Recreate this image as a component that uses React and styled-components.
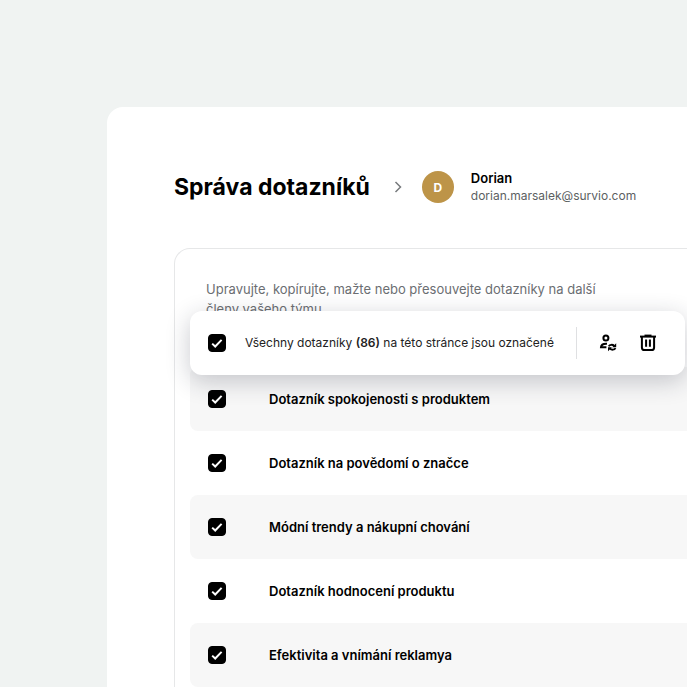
import { useState } from "react";
import styled, { createGlobalStyle } from "styled-components";

const GlobalStyle = createGlobalStyle`
  * {
    box-sizing: border-box;
  }

  body {
    margin: 0;
    background: #f0f3f2;
    color: #000;
    font-family: Inter, "Liberation Sans", sans-serif;
  }
`;

const Page = styled.div`
  display: flex;
  min-height: 100vh;
  padding: 107px 0 0 107px;
  overflow: hidden;
`;

const Panel = styled.main`
  flex: 1;
  min-width: 0;
  padding: 62px 0 0 67px;
  background: #fff;
  border-radius: 16px 0 0 0;
`;

const Header = styled.header`
  display: flex;
  align-items: center;
  margin-bottom: 43px;
`;

const Title = styled.h1`
  margin: 0;
  font-size: 23px;
  font-weight: 700;
  line-height: 36px;
  white-space: nowrap;
`;

const Chevron = styled.svg`
  flex: none;
  width: 8px;
  height: 12px;
  margin: 0 20px 0 24px;
`;

const Avatar = styled.div`
  display: flex;
  flex: none;
  align-items: center;
  justify-content: center;
  width: 32px;
  height: 32px;
  margin-right: 17px;
  border-radius: 50%;
  background: #bd9448;
  color: #fff;
  font-size: 12px;
  font-weight: 700;
`;

const UserName = styled.p`
  margin: 0;
  font-size: 13px;
  font-weight: 600;
  line-height: 18px;
`;

const UserEmail = styled.p`
  margin: 0;
  color: #5c5f62;
  font-size: 12px;
  line-height: 18px;
`;

const Card = styled.section`
  position: relative;
  padding: 30px 0 0 15px;
  border: 1px solid #e6e7e8;
  border-width: 1px 0 0 1px;
  border-radius: 16px 0 0 0;
`;

const Description = styled.p`
  max-width: 420px;
  margin: 0 0 48px;
  padding-left: 16px;
  color: #6b6e72;
  font-size: 13px;
  line-height: 20px;
`;

const SelectionBar = styled.div`
  position: absolute;
  top: 62px;
  right: 2px;
  left: 15px;
  display: flex;
  align-items: center;
  height: 64px;
  padding: 0 21px 0 18px;
  border-radius: 12px;
  background: #fff;
  box-shadow: 0 6px 24px rgba(30, 35, 55, 0.24);
`;

const SelectionLabel = styled.label`
  flex: 1;
  padding-left: 19px;
  color: #222;
  font-size: 12px;
  line-height: 20px;

  strong {
    font-weight: 600;
  }
`;

const Divider = styled.span`
  width: 1px;
  height: 32px;
  margin-right: 15px;
  background: #dfe0e2;
`;

const IconButton = styled.button`
  display: flex;
  align-items: center;
  justify-content: center;
  width: 32px;
  height: 32px;
  margin-left: ${({ $spaced }) => ($spaced ? "8px" : "0")};
  padding: 0;
  border: 0;
  background: none;
  color: #000;
  cursor: pointer;
`;

const CheckboxBox = styled.span`
  display: grid;
  flex: none;
  width: 18px;
  height: 18px;

  input,
  svg {
    grid-area: 1 / 1;
    width: 18px;
    height: 18px;
    margin: 0;
  }

  input {
    appearance: none;
    border: 1px solid #000;
    border-radius: 4px;
    background: #fff;
    cursor: pointer;
  }

  input:checked {
    background: #000;
  }

  svg {
    pointer-events: none;
  }
`;

const SurveyList = styled.ul`
  margin: 0;
  padding: 0;
  list-style: none;
`;

const SurveyRow = styled.li`
  display: flex;
  align-items: center;
  height: 64px;
  padding-left: 18px;
  border-radius: 8px 0 0 8px;

  &:nth-child(odd) {
    background: #f7f7f7;
  }
`;

const SurveyName = styled.label`
  padding-left: 43px;
  font-size: 13px;
  font-weight: 600;
  line-height: 20px;
`;

const surveys = [
  "Dotazník spokojenosti s produktem",
  "Dotazník na povědomí o značce",
  "Módní trendy a nákupní chování",
  "Dotazník hodnocení produktu",
  "Efektivita a vnímání reklamya",
];

function Checkbox({ id, checked, onChange }) {
  return (
    <CheckboxBox>
      <input type="checkbox" id={id} checked={checked} onChange={onChange} />
      {checked && (
        <svg viewBox="0 0 18 18" fill="none" aria-hidden="true">
          <path d="M4.2 9.6 7.2 12.5 13.6 5.9" stroke="#fff" strokeWidth="2" />
        </svg>
      )}
    </CheckboxBox>
  );
}

function TransferIcon() {
  return (
    <svg
      width="18"
      height="18"
      viewBox="0 0 18 18"
      fill="none"
      stroke="currentColor"
      strokeWidth="2"
      aria-hidden="true"
    >
      <circle cx="6.9" cy="3.9" r="2.5" />
      <path d="M8 9.8C4.4 9.6 2.2 10.8 2 13.2H7.4" />
      <path d="M9.7 12.4C10.7 10.4 13.5 10.2 15.4 12" strokeWidth="1.8" />
      <path d="M17.2 9.2V13.2H13.2Z" fill="currentColor" stroke="none" />
      <path d="M16.5 14.1C15.5 16.1 12.7 16.3 10.8 14.5" strokeWidth="1.8" />
      <path d="M9 17.2V13.3H12.9Z" fill="currentColor" stroke="none" />
    </svg>
  );
}

function TrashIcon() {
  return (
    <svg
      width="18"
      height="18"
      viewBox="0 0 18 18"
      fill="none"
      stroke="currentColor"
      strokeWidth="2"
      aria-hidden="true"
    >
      <path d="M1 2.6H17" />
      <path d="M5.5 1.3H12.5" strokeWidth="1.4" />
      <path d="M2.9 3V13.4Q2.9 16 5.5 16H12.5Q15.1 16 15.1 13.4V3" />
      <path d="M7.1 5.6V12.8M10.9 5.6V12.8" />
    </svg>
  );
}

export default function App() {
  const [selected, setSelected] = useState(surveys);
  const allSelected = selected.length === surveys.length;

  function toggleSurvey(name) {
    setSelected(
      selected.includes(name)
        ? selected.filter((item) => item !== name)
        : [...selected, name]
    );
  }

  return (
    <>
      <GlobalStyle />
      <Page>
        <Panel>
          <Header>
            <Title>Správa dotazníků</Title>
            <Chevron viewBox="0 0 8 12" fill="none" aria-hidden="true">
              <path d="M1.5 1 6.5 6 1.5 11" stroke="#777a7d" strokeWidth="1.5" />
            </Chevron>
            <Avatar>D</Avatar>
            <div>
              <UserName>Dorian</UserName>
              <UserEmail>dorian.marsalek@survio.com</UserEmail>
            </div>
          </Header>

          <Card>
            <Description>
              Upravujte, kopírujte, mažte nebo přesouvejte dotazníky na další
              členy vašeho týmu
            </Description>
            <SurveyList>
              {surveys.map((name, index) => (
                <SurveyRow key={name}>
                  <Checkbox
                    id={`survey-${index}`}
                    checked={selected.includes(name)}
                    onChange={() => toggleSurvey(name)}
                  />
                  <SurveyName htmlFor={`survey-${index}`}>{name}</SurveyName>
                </SurveyRow>
              ))}
            </SurveyList>

            <SelectionBar>
              <Checkbox
                id="select-all"
                checked={allSelected}
                onChange={() => setSelected(allSelected ? [] : surveys)}
              />
              <SelectionLabel htmlFor="select-all">
                Všechny dotazníky <strong>(86)</strong> na této stránce jsou
                označené
              </SelectionLabel>
              <Divider />
              <IconButton type="button" aria-label="Přesunout">
                <TransferIcon />
              </IconButton>
              <IconButton type="button" aria-label="Smazat" $spaced>
                <TrashIcon />
              </IconButton>
            </SelectionBar>
          </Card>
        </Panel>
      </Page>
    </>
  );
}
